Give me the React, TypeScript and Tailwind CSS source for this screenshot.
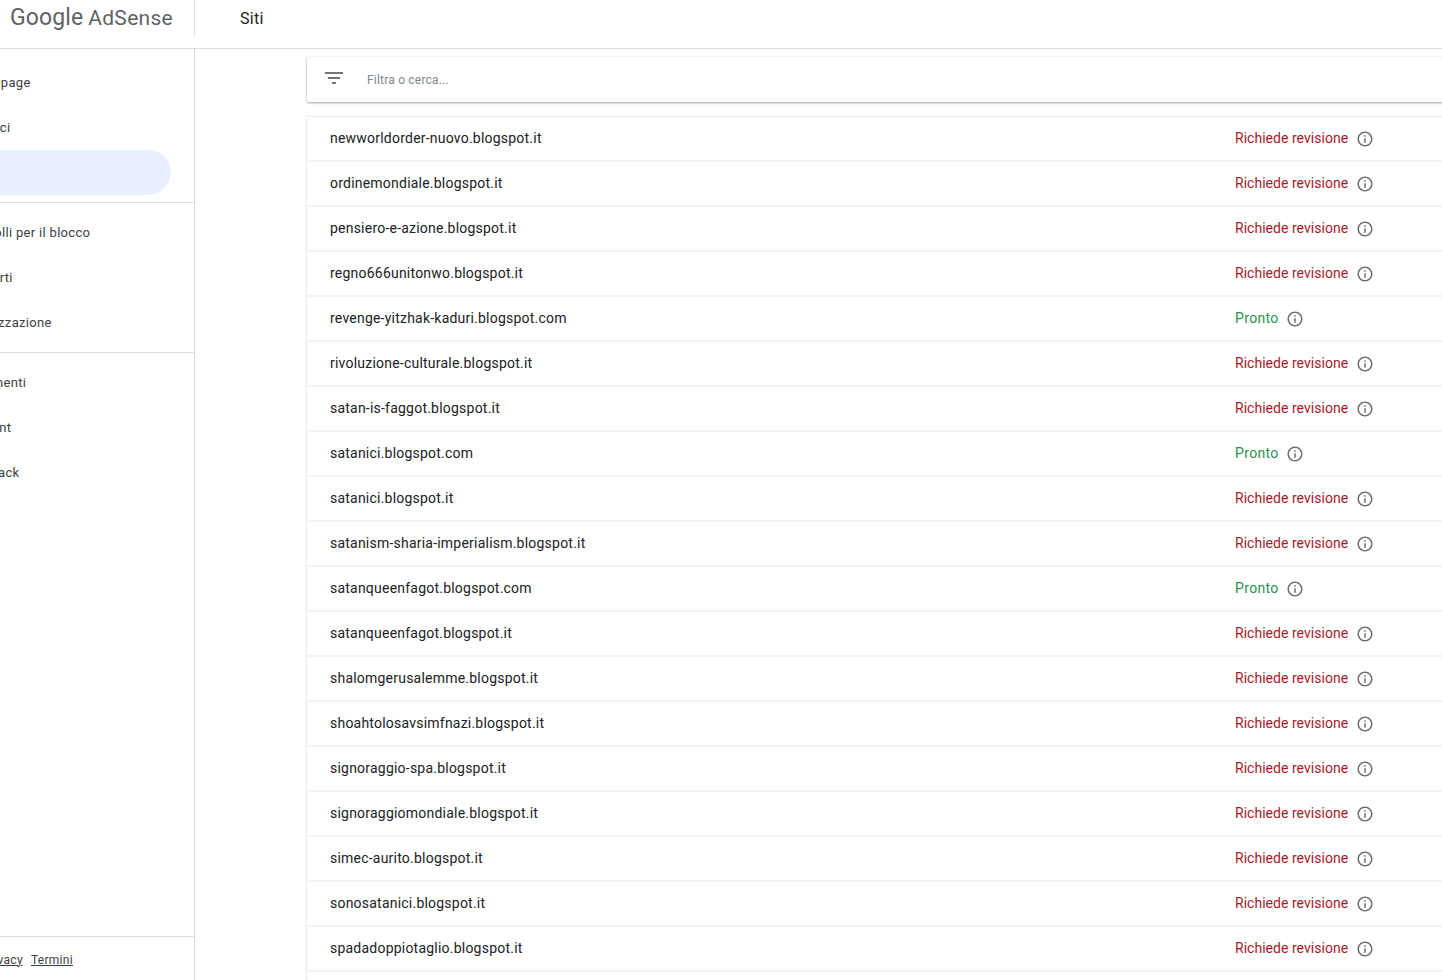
const rows: [string, boolean][] = [
  ["newworldorder-nuovo.blogspot.it", false],
  ["ordinemondiale.blogspot.it", false],
  ["pensiero-e-azione.blogspot.it", false],
  ["regno666unitonwo.blogspot.it", false],
  ["revenge-yitzhak-kaduri.blogspot.com", true],
  ["rivoluzione-culturale.blogspot.it", false],
  ["satan-is-faggot.blogspot.it", false],
  ["satanici.blogspot.com", true],
  ["satanici.blogspot.it", false],
  ["satanism-sharia-imperialism.blogspot.it", false],
  ["satanqueenfagot.blogspot.com", true],
  ["satanqueenfagot.blogspot.it", false],
  ["shalomgerusalemme.blogspot.it", false],
  ["shoahtolosavsimfnazi.blogspot.it", false],
  ["signoraggio-spa.blogspot.it", false],
  ["signoraggiomondiale.blogspot.it", false],
  ["simec-aurito.blogspot.it", false],
  ["sonosatanici.blogspot.it", false],
  ["spadadoppiotaglio.blogspot.it", false],
  ["", false],
];

function InfoIcon() {
  return (
    <svg width="18" height="18" viewBox="0 0 24 24" fill="#6b6f73" className="ml-[7.5px] shrink-0">
      <path d="M11 7h2v2h-2zm0 4h2v6h-2zm1-9C6.48 2 2 6.48 2 12s4.48 10 10 10 10-4.48 10-10S17.52 2 12 2zm0 18c-4.41 0-8-3.59-8-8s3.59-8 8-8 8 3.59 8 8-3.59 8-8 8z" />
    </svg>
  );
}

function NavItem({ label, active }: { label?: string; active?: boolean }) {
  return (
    <div className={active ? "h-[45px] w-[171px] rounded-r-full bg-[#e8f0fe]" : "h-[45px] flex items-center"}>
      {label && <span className="-ml-[39px] whitespace-nowrap text-[13px] tracking-[0.32px] text-[#3c4043]">{label}</span>}
    </div>
  );
}

export default function App() {
  return (
    <div className="h-[980px] w-[1442px] overflow-hidden bg-white font-['Roboto',sans-serif]">
      <header className="flex h-[49px] border-b border-[#dadce0]">
        <div className="flex h-[37px] w-[195px] shrink-0 items-baseline border-r border-[#e3e3e3] pl-[10px] pt-[3px]">
          <span className="whitespace-nowrap text-[23px] leading-[30px] tracking-[0.1px] text-[#5f6368]">Google</span>
          <span className="ml-[5px] whitespace-nowrap text-[21px] leading-[30px] tracking-[0.3px] text-[#5f6368]">AdSense</span>
        </div>
        <div className="pl-[45px] pt-[9px] text-[16px] leading-[20px] tracking-[0.3px] text-[#202124]">Siti</div>
      </header>
      <div className="flex h-[931px]">
        <aside className="flex w-[195px] shrink-0 flex-col overflow-hidden border-r border-[#dadce0] pt-[11px]">
          <NavItem label="Home page" />
          <NavItem label="Annunci" />
          <NavItem active />
          <div className="my-[7px] border-t border-[#dadce0]" />
          <NavItem label="Controlli per il blocco" />
          <NavItem label="Rapporti" />
          <NavItem label="Ottimizzazione" />
          <div className="my-[7px] border-t border-[#dadce0]" />
          <NavItem label="Pagamenti" />
          <NavItem label="Account" />
          <NavItem label="Feedback" />
          <div className="mt-auto flex h-[44px] items-center gap-[8px] border-t border-[#dadce0] pt-[2px]">
            <span className="-ml-[18px] text-[12px] tracking-[0.3px] text-[#3c4043] underline">Privacy</span>
            <span className="text-[12px] tracking-[0.3px] text-[#3c4043] underline">Termini</span>
          </div>
        </aside>
        <main className="min-w-0 flex-1 pl-[112px] pt-[8px]">
          <div className="flex h-[45px] w-[1200px] items-center bg-white pl-[15px] shadow-[0_1px_2px_rgba(60,64,67,0.45),0_0_2px_rgba(60,64,67,0.1)]">
            <svg width="24" height="24" viewBox="0 0 24 24" fill="#757575" className="-mt-[3px] -ml-[0.5px]">
              <path d="M10 18h4v-2h-4v2zM3 6v2h18V6H3zm3 7h12v-2H6v2z" />
            </svg>
            <span className="ml-[21.5px] text-[12px] tracking-[0.2px] text-[#80868b]">Filtra o cerca...</span>
          </div>
          <div className="mt-[15px] w-[1200px] bg-white shadow-[0_0_2px_rgba(60,64,67,0.3)]">
            {rows.map(([name, ready], i) => (
              <div key={i} className="flex h-[45px] items-center border-b-2 border-[#f1f3f4] pl-[23px]">
                <span className="w-[905px] shrink-0 whitespace-nowrap text-[14px] tracking-[0.22px] text-[#202124]">{name}</span>
                {name && (
                  <span className={ready ? "flex items-center text-[14px] tracking-[0.35px] text-[#2b9150]" : "flex items-center text-[14px] tracking-[0.03px] text-[#a8192a]"}>
                    {ready ? "Pronto" : "Richiede revisione"}
                    <InfoIcon />
                  </span>
                )}
              </div>
            ))}
          </div>
        </main>
      </div>
    </div>
  );
}
